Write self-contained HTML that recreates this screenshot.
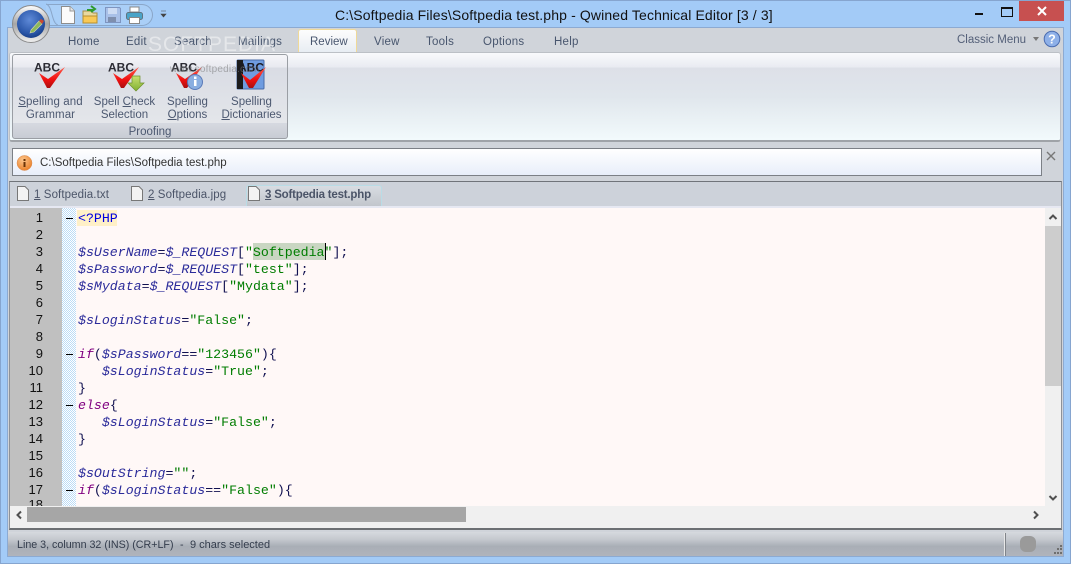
<!DOCTYPE html>
<html><head><meta charset="utf-8"><style>
html,body{margin:0;padding:0}
body{width:1071px;height:564px;overflow:hidden;position:relative;background:#a3cbf7;font-family:"Liberation Sans",sans-serif;font-size:11.5px;color:#45526a}
.a{position:absolute}
.t{position:absolute;white-space:nowrap}
.c{position:absolute;text-align:center;white-space:nowrap;line-height:13px;color:#4c5870}
.m{position:absolute;left:78px;font-family:"Liberation Mono",monospace;font-size:13.25px;line-height:17px;height:17px;white-space:pre;color:#101050}
.n{position:absolute;left:10px;width:33px;margin-top:-1px;text-align:right;font-size:13px;line-height:17px;color:#111}
i{color:#2b2b9a;font-style:italic}
b.s{font-weight:normal;color:#007d00}
b.k{font-weight:normal;font-style:italic;color:#800080}
.f{position:absolute;left:66px;width:7px;height:1px;background:#000}
u{text-decoration:underline}
.doc{position:absolute;top:186px;width:12px;height:15px}
.r{position:absolute;top:36px;white-space:nowrap;color:#48566e;letter-spacing:.25px}
</style></head><body>
<div class="a" style="left:0;top:0;width:1071px;height:564px;box-sizing:border-box;border:1px solid #86a5cf"></div>
<div class="a" style="left:7px;top:27px;width:1057px;height:530px;background:#d0d4da;border:1px solid #8caad2;box-sizing:border-box"></div>

<!-- title bar -->
<div class="a" style="left:1019px;top:1px;width:45px;height:20px;background:#c75050"></div>
<svg class="a" style="left:1036px;top:5px" width="12" height="12"><path d="M2 2 L10 10 M10 2 L2 10" stroke="#fff" stroke-width="2"/></svg>
<div class="a" style="left:975px;top:13px;width:8px;height:2px;background:#111"></div>
<div class="a" style="left:1001px;top:7px;width:10px;height:7px;border:1px solid #111;border-top-width:2px"></div>
<div class="t" style="left:335px;top:7px;font-size:14px;color:#111;letter-spacing:.13px">C:\Softpedia Files\Softpedia test.php - Qwined Technical Editor [3 / 3]</div>

<!-- QAT -->
<div class="a" style="left:46px;top:4px;width:106px;height:20px;border:1px solid #8aa6c8;border-left:none;border-radius:0 11px 11px 0;background:#aacff7"></div>
<svg class="a" style="left:46px;top:3px" width="12" height="23"><path d="M0 1 C7 3 5 20 12 22" stroke="#8aa6c8" fill="#a3cbf7"/></svg>
<svg class="a" style="left:58px;top:4px" width="110" height="22">
<path d="M3.500 2.500H12L16.500 7V19.500H3.500Z" fill="#fbfbfb" stroke="#8d8d8d"/><path d="M12 2.500V7H16.500" fill="#e5e5e5" stroke="#999"/>
<path d="M25 7H33L35 9H39V19H25Z" fill="#e8d9a0" stroke="#a88f45"/><path d="M25 12H39V19H25Z" fill="#f8c957" stroke="#b8902f"/><path d="M29 6 H35 M33 2 L37 5 L33 8" stroke="#2e9b2e" fill="none" stroke-width="2"/>
<path d="M47.500 3.500H61.500L62.500 4.500V18.500H47.500Z" fill="#a8c0e8" stroke="#7e95c0"/><rect x="50" y="4" width="9" height="6" fill="#cddcf4"/><rect x="50" y="13" width="8" height="5" fill="#7e8fae"/>
<rect x="72" y="3" width="9" height="5" fill="#fff" stroke="#888"/><rect x="68.500" y="8.500" width="16" height="7" rx="2" fill="#4aa4c8" stroke="#5f7480"/><rect x="71.500" y="13.500" width="10" height="6" fill="#fff" stroke="#888"/>
<path d="M103 7H108M103 10H108L105.500 13Z" fill="#444" stroke="#444" stroke-width=".6"/>
</svg>

<!-- app button -->
<svg class="a" style="left:11px;top:4px" width="40" height="40">
<defs><radialGradient id="g" cx=".45" cy=".35" r=".7"><stop offset="0" stop-color="#5f8ad8"/><stop offset=".7" stop-color="#2a56a8"/><stop offset="1" stop-color="#153a80"/></radialGradient>
<linearGradient id="h" x1="0" y1="0" x2="0" y2="1"><stop offset="0" stop-color="#fff"/><stop offset=".5" stop-color="#a5a5a5"/><stop offset="1" stop-color="#f0f0f0"/></linearGradient></defs>
<circle cx="20" cy="20" r="18.500" fill="url(#h)" stroke="#8a8a8a"/><circle cx="20" cy="20" r="14" fill="url(#g)"/>
<path d="M20 26 L28 17 L31 20 L23 28 L19 29Z" fill="#8db85a" stroke="#d8d8b0" stroke-width=".6"/><path d="M28 17 L31 20 L33 17 L30 15Z" fill="#c94a30"/>
</svg>

<!-- ribbon tabs -->
<div class="r" style="left:68px">Home</div>
<div class="r" style="left:126px">Edit</div>
<div class="r" style="left:174px">Search</div>
<div class="r" style="left:238px">Mailings</div>
<div class="a" style="left:298px;top:29px;width:59px;height:23px;box-sizing:border-box;border:1px solid #efd998;border-bottom:none;border-radius:3px 3px 0 0;background:linear-gradient(#fdfdfd,#e8edf3)"></div>
<div class="r" style="left:310px;letter-spacing:0">Review</div>
<div class="r" style="left:374px">View</div>
<div class="r" style="left:426px">Tools</div>
<div class="r" style="left:483px">Options</div>
<div class="r" style="left:554px">Help</div>
<div class="t" style="left:957px;top:34px;color:#535f78">Classic Menu</div>
<svg class="a" style="left:1032px;top:37px" width="8" height="5"><path d="M1 0H7L4 4Z" fill="#777"/></svg>
<svg class="a" style="left:1043px;top:30px" width="18" height="18"><circle cx="9" cy="9" r="7.800" fill="#8eb0e8" stroke="#4a6cb0"/><text x="9" y="13.500" text-anchor="middle" font-family="Liberation Sans" font-weight="bold" font-size="12.500" fill="#fff">?</text></svg>
<div class="t" style="left:148px;top:33px;font-size:21px;letter-spacing:1px;color:#fff;opacity:.45">SOFTPEDIA</div>

<!-- ribbon panel -->
<div class="a" style="left:9px;top:52px;width:1052px;height:90px;box-sizing:border-box;border:1px solid #bcc0c6;border-bottom:2px solid #9fa3a8;border-radius:3px;background:linear-gradient(#f9fafc 0,#e9ebf2 14px,#dde0e8 15px,#e0e6ec 50%,#f2fafc 100%)"></div>
<div class="a" style="left:12px;top:54px;width:276px;height:85px;box-sizing:border-box;border:1px solid #9a9ea4;border-radius:3px;background:linear-gradient(#f6f6f9 0,#e8eaf0 12px,#d9dce4 13px,#e4e6ea 68px,#d6d9e0 68px,#c8ccd4 100%)"></div>

<svg class="a" style="left:12px;top:54px" width="276" height="50">
<defs><linearGradient id="r" x1="0" y1="0" x2="0" y2="1"><stop offset="0" stop-color="#ff5a4a"/><stop offset=".6" stop-color="#f01010"/><stop offset="1" stop-color="#a81010"/></linearGradient>
<linearGradient id="gr" x1="0" y1="0" x2="0" y2="1"><stop offset="0" stop-color="#c8e070"/><stop offset="1" stop-color="#80b030"/></linearGradient></defs>
<g font-family="Liberation Sans" font-weight="bold" font-size="12" fill="#2c2c34">
<text x="22" y="17.500">ABC</text>
<text x="96" y="17.500">ABC</text>
<text x="159" y="17.500">ABC</text>
</g>
<path d="M27 19 L36 25 L53 13 L38 34 L35 34Z" fill="url(#r)"/>
<path d="M101 19 L110 25 L127 13 L112 34 L109 34Z" fill="url(#r)"/>
<path d="M164 19 L173 25 L190 13 L175 34 L172 34Z" fill="url(#r)"/>
<path d="M120 22H128V29H132L124 37L116 29H120Z" fill="url(#gr)" stroke="#6b8f2a" stroke-width=".7"/>
<circle cx="183" cy="28" r="7.500" fill="#8aaee0" stroke="#5a7ab8"/><rect x="182" y="26" width="2.500" height="6" fill="#fff"/><rect x="182" y="22.500" width="2.500" height="2.500" fill="#fff"/>
<rect x="225" y="6" width="27" height="29" rx="1" fill="#6f9ce0" stroke="#4a6ca8"/><rect x="225" y="6" width="6" height="29" fill="#1c1c1c"/>
<text x="226" y="17.500" font-family="Liberation Sans" font-weight="bold" font-size="12" fill="#1a1a22">ABC</text>
<path d="M229 19 L238 26 L254 13 L241 34 L237 34Z" fill="url(#r)"/>
</svg>
<div class="t" style="left:170px;top:64px;font-size:10px;color:#777;opacity:.55;letter-spacing:.2px">www.softpedia.com</div>

<div class="c" style="left:10px;width:81px;top:96px;letter-spacing:.1px"><u>S</u>pelling and<br>Grammar</div>
<div class="c" style="left:84px;width:81px;top:96px">Spell <u>C</u>heck<br>Selection</div>
<div class="c" style="left:147px;width:81px;top:96px">Spelling<br><u>O</u>ptions</div>
<div class="c" style="left:211px;width:81px;top:96px">Spelling<br><u>D</u>ictionaries</div>
<div class="c" style="left:12px;width:276px;top:126px">Proofing</div>

<!-- info bar -->
<div class="a" style="left:12px;top:148px;width:1030px;height:28px;box-sizing:border-box;border:1px solid #7c8086;background:linear-gradient(#fff,#e8eefa)"></div>
<svg class="a" style="left:16px;top:155px" width="17" height="17"><defs><radialGradient id="o" cx=".4" cy=".3" r=".8"><stop offset="0" stop-color="#fbc48a"/><stop offset="1" stop-color="#e87a20"/></radialGradient></defs><circle cx="8.500" cy="8" r="7.500" fill="url(#o)" stroke="#d88a50" stroke-width=".5"/><rect x="7.500" y="7" width="2" height="5" fill="#6a3408"/><rect x="7.500" y="4" width="2" height="2" fill="#6a3408"/></svg>
<div class="t" style="left:40px;top:157px;font-size:11.5px;color:#333">C:\Softpedia Files\Softpedia test.php</div>
<svg class="a" style="left:1046px;top:151px" width="10" height="10"><path d="M1 1 L9 9 M9 1 L1 9" stroke="#777" stroke-width="1.400"/></svg>

<!-- doc frame -->
<div class="a" style="left:9px;top:181px;width:1053px;height:349px;box-sizing:border-box;border-top:1px solid #70747a;border-left:1px solid #8e9298;border-right:1px solid #8e9298;border-bottom:2px solid #6c6f73;background:#f0f0f0"></div>
<div class="a" style="left:10px;top:182px;width:1051px;height:24px;background:#cdd2da"></div>
<div class="a" style="left:10px;top:206px;width:1051px;height:2px;background:#e6e8f2"></div>

<!-- tabs -->
<div class="a" style="left:246px;top:185px;width:136px;height:21px;box-sizing:border-box;border:1px solid #b9dce6;border-bottom:none;border-radius:3px 3px 0 0;background:linear-gradient(#d8dce2,#c2c6cc)"></div>
<svg class="doc" style="left:17px"><path d="M.5 .5H8L11.500 4V14.500H.5Z" fill="#f3f3f3" stroke="#777"/></svg>
<svg class="doc" style="left:131px"><path d="M.5 .5H8L11.500 4V14.500H.5Z" fill="#f3f3f3" stroke="#777"/></svg>
<svg class="doc" style="left:248px"><path d="M.5 .5H8L11.500 4V14.500H.5Z" fill="#f3f3f3" stroke="#777"/></svg>
<div class="t" style="left:34px;top:189px;font-size:11.500px;color:#4b5468;letter-spacing:.1px"><u>1</u> Softpedia.txt</div>
<div class="t" style="left:148px;top:189px;font-size:11.500px;color:#4b5468;letter-spacing:.1px"><u>2</u> Softpedia.jpg</div>
<div class="t" style="left:265px;top:189px;font-size:11.500px;font-weight:bold;color:#4b5468;letter-spacing:-.2px"><u>3</u> Softpedia test.php</div>

<!-- editor -->
<div class="a" style="left:10px;top:208px;width:1035px;height:298px;background:#fff8f7;overflow:hidden">
<div class="a" style="left:0;top:0;width:52px;height:298px;background:#c0c0c0"></div>
<svg class="a" style="left:52px;top:0" width="14" height="298"><defs><pattern id="d" width="2" height="2" patternUnits="userSpaceOnUse"><rect width="2" height="2" fill="#fff"/><rect width="1" height="1" fill="#bcdcf6"/><rect x="1" y="1" width="1" height="1" fill="#bcdcf6"/></pattern></defs><rect width="14" height="298" fill="url(#d)"/></svg>
<div class="a" style="left:67px;top:2px;width:40px;height:16px;background:#fff0c8"></div>
<div class="n" style="top:289px;left:0;width:33px">18</div>
</div>

<div class="n" style="top:210px">1</div><div class="n" style="top:227px">2</div><div class="n" style="top:244px">3</div><div class="n" style="top:261px">4</div><div class="n" style="top:278px">5</div><div class="n" style="top:295px">6</div><div class="n" style="top:312px">7</div><div class="n" style="top:329px">8</div><div class="n" style="top:346px">9</div><div class="n" style="top:363px">10</div><div class="n" style="top:380px">11</div><div class="n" style="top:397px">12</div><div class="n" style="top:414px">13</div><div class="n" style="top:431px">14</div><div class="n" style="top:448px">15</div><div class="n" style="top:465px">16</div><div class="n" style="top:482px">17</div>

<div class="f" style="top:218px"></div><div class="f" style="top:354px"></div><div class="f" style="top:405px"></div><div class="f" style="top:490px"></div>

<div class="a" style="left:253px;top:243px;width:72px;height:17px;background:#c9d6c2"></div>
<div class="a" style="left:325px;top:243px;width:1px;height:17px;background:#000"></div>

<div class="m" style="top:210px;color:#0000e0">&lt;?PHP</div>
<div class="m" style="top:244px"><i>$sUserName</i>=<i>$_REQUEST</i>[<b class="s">"Softpedia"</b>];</div>
<div class="m" style="top:261px"><i>$sPassword</i>=<i>$_REQUEST</i>[<b class="s">"test"</b>];</div>
<div class="m" style="top:278px"><i>$sMydata</i>=<i>$_REQUEST</i>[<b class="s">"Mydata"</b>];</div>
<div class="m" style="top:312px"><i>$sLoginStatus</i>=<b class="s">"False"</b>;</div>
<div class="m" style="top:346px"><b class="k">if</b>(<i>$sPassword</i>==<b class="s">"123456"</b>){</div>
<div class="m" style="top:363px">   <i>$sLoginStatus</i>=<b class="s">"True"</b>;</div>
<div class="m" style="top:380px">}</div>
<div class="m" style="top:397px"><b class="k">else</b>{</div>
<div class="m" style="top:414px">   <i>$sLoginStatus</i>=<b class="s">"False"</b>;</div>
<div class="m" style="top:431px">}</div>
<div class="m" style="top:465px"><i>$sOutString</i>=<b class="s">""</b>;</div>
<div class="m" style="top:482px"><b class="k">if</b>(<i>$sLoginStatus</i>==<b class="s">"False"</b>){</div>

<!-- v scrollbar -->
<div class="a" style="left:1045px;top:226px;width:16px;height:160px;background:#cdcdcd"></div>
<svg class="a" style="left:1048px;top:213px" width="10" height="8"><path d="M1.500 6 L5 2.500 L8.500 6" fill="none" stroke="#505050" stroke-width="2"/></svg>
<svg class="a" style="left:1048px;top:494px" width="10" height="8"><path d="M1.500 2 L5 5.500 L8.500 2" fill="none" stroke="#505050" stroke-width="2"/></svg>
<!-- h scrollbar -->
<div class="a" style="left:27px;top:507px;width:439px;height:15px;background:#a6a6a6"></div>
<svg class="a" style="left:15px;top:510px" width="8" height="10"><path d="M6 1.500 L2.500 5 L6 8.500" fill="none" stroke="#505050" stroke-width="2"/></svg>
<svg class="a" style="left:1032px;top:510px" width="8" height="10"><path d="M2 1.500 L5.500 5 L2 8.500" fill="none" stroke="#505050" stroke-width="2"/></svg>

<!-- status bar -->
<div class="a" style="left:8px;top:532px;width:1055px;height:24px;background:linear-gradient(#d6d9de 0,#c5c9cf 30%,#a9aeb6 60%,#b0b4bc 100%)"></div>
<div class="a" style="left:1004px;top:533px;width:1px;height:23px;background:#e8e8e8"></div>
<div class="a" style="left:1005px;top:533px;width:1px;height:23px;background:#80848a"></div>
<div class="a" style="left:1020px;top:536px;width:16px;height:16px;border-radius:6px;background:#9a9a9a"></div>
<svg class="a" style="left:1052px;top:545px" width="11" height="11"><g fill="#6f6f6f"><rect x="8" y="0" width="2" height="2"/><rect x="5" y="3" width="2" height="2"/><rect x="8" y="3" width="2" height="2"/><rect x="2" y="7" width="2" height="2"/><rect x="5" y="7" width="2" height="2"/><rect x="8" y="7" width="2" height="2"/></g></svg>
<div class="t" style="left:17px;top:539px;font-size:10.7px;color:#333c4c">Line 3, column 32 (INS) (CR+LF)</div>
<div class="t" style="left:180px;top:539px;font-size:10.7px;color:#333c4c">-</div>
<div class="t" style="left:190px;top:539px;font-size:11px;color:#333c4c">9 chars selected</div>
</body></html>
